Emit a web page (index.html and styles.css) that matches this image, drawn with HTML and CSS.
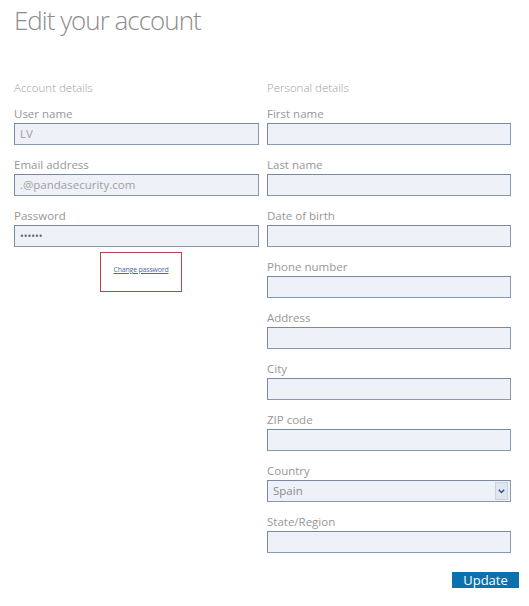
FILE: index.html
```html
<!DOCTYPE html>
<html>
<head>
<meta charset="utf-8">
<link rel="stylesheet" href="styles.css">
</head>
<body>
<div class="page">
  <h1 class="title">Edit your account</h1>
  <div class="columns">
    <div class="col col-left">
      <div class="section">Account details</div>
      <div class="field">
        <label class="label">User name</label>
        <div class="input">LV</div>
      </div>
      <div class="field">
        <label class="label">Email address</label>
        <div class="input">.@pandasecurity.com</div>
      </div>
      <div class="field field-last">
        <label class="label">Password</label>
        <div class="input input-pass">••••••</div>
      </div>
      <div class="change-box"><a class="change-link" href="#">Change password</a></div>
    </div>
    <div class="col col-right">
      <div class="section">Personal details</div>
      <div class="field"><label class="label">First name</label><div class="input"></div></div>
      <div class="field"><label class="label">Last name</label><div class="input"></div></div>
      <div class="field"><label class="label">Date of birth</label><div class="input"></div></div>
      <div class="field"><label class="label">Phone number</label><div class="input"></div></div>
      <div class="field"><label class="label">Address</label><div class="input"></div></div>
      <div class="field"><label class="label">City</label><div class="input"></div></div>
      <div class="field"><label class="label">ZIP code</label><div class="input"></div></div>
      <div class="field">
        <label class="label">Country</label>
        <div class="input select"><span class="select-text">Spain</span><span class="select-arrow"><svg width="7" height="5" viewBox="0 0 7 5"><path d="M0.8 0.8 L3.5 3.6 L6.2 0.8" fill="none" stroke="#2b4f8a" stroke-width="1.4"/></svg></span></div>
      </div>
      <div class="field"><label class="label">State/Region</label><div class="input"></div></div>
    </div>
  </div>
  <div class="actions"><button class="btn-update">Update</button></div>
</div>
</body>
</html>
```
FILE: styles.css
```css
html, body {
  margin: 0;
  padding: 0;
  background: #ffffff;
}
.page {
  font-family: "Open Sans", "DejaVu Sans", sans-serif;
  padding: 4px 10px 0 14px;
  width: 529px;
  box-sizing: border-box;
}
.title {
  margin: 0;
  font-size: 26px;
  line-height: 32px;
  font-weight: 300;
  color: #8c8c8c;
  letter-spacing: -1px;
}
.columns {
  display: flex;
  gap: 8px;
  margin-top: 44px;
}
.col-left { width: 245px; }
.col-right { width: 244px; }
.section {
  font-size: 11.5px;
  line-height: 15px;
  color: #a0a0a0;
  font-weight: 300;
  margin-bottom: 11px;
}
.field {
  display: flex;
  flex-direction: column;
  margin-bottom: 12px;
}
.field-last { margin-bottom: 0; }
.label {
  font-size: 11.5px;
  line-height: 15px;
  color: #979797;
  margin-bottom: 2px;
}
.input {
  box-sizing: border-box;
  height: 22px;
  border: 1px solid #8898ae;
  border-top-color: #7a899f;
  border-left-color: #7a899f;
  background: #eef1f7;
  font-size: 11.5px;
  line-height: 20px;
  color: #a0a0a0;
  padding: 0 5px;
  overflow: hidden;
  white-space: nowrap;
}
.input-pass {
  color: #666;
  font-size: 10px;
  letter-spacing: 0;
}
.select {
  display: flex;
  align-items: center;
  justify-content: space-between;
  padding-right: 2px;
}
.select-text { color: #8a8a8a; }
.select-arrow {
  width: 11px;
  height: 16px;
  background: #dfe6f0;
  border: 1px solid #c8d2e2;
  display: flex;
  align-items: center;
  justify-content: center;
}
.change-box {
  margin: 5px 0 0 86px;
  width: 82px;
  height: 40px;
  box-sizing: border-box;
  border: 1px solid #b3454f;
  display: flex;
  align-items: center;
  justify-content: center;
  padding-bottom: 5px;
}
.change-link {
  font-size: 7px;
  color: #4c6aa0;
  text-decoration: underline;
  letter-spacing: -0.2px;
}
.actions {
  display: flex;
  justify-content: flex-end;
  margin-top: 7px;
}
.btn-update {
  width: 67px;
  height: 16px;
  border: none;
  background: #0b70ad;
  color: #ffffff;
  font-family: "Open Sans", "DejaVu Sans", sans-serif;
  font-size: 13px;
  line-height: 16px;
  padding: 0;
}
```
